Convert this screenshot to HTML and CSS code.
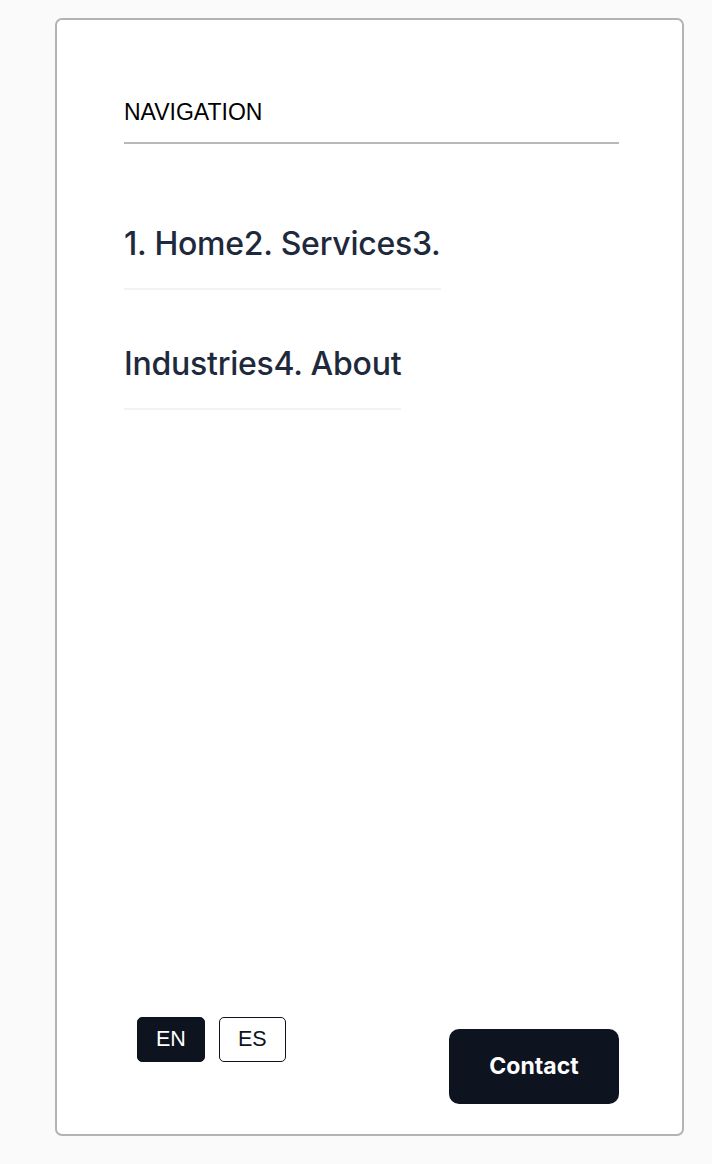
FILE: index.html
```html
<!DOCTYPE html>
<html lang="en">
<head>
<meta charset="utf-8">
<title>Navigation</title>
<link rel="stylesheet" href="styles.css">
</head>
<body>
<aside class="panel">
  <header class="panel-head">NAVIGATION</header>
  <nav class="menu">
    <ol class="menu-list"><li class="menu-item"><a href="#" class="menu-link">1. Home</a></li><li class="menu-item"><a href="#" class="menu-link">2. Services</a></li><li class="menu-item"><a href="#" class="menu-link">3. Industries</a></li><li class="menu-item"><a href="#" class="menu-link">4. About</a></li></ol>
  </nav>
  <footer class="panel-foot">
    <div class="lang">
      <button class="lang-btn is-active" type="button">EN</button>
      <button class="lang-btn" type="button">ES</button>
    </div>
    <a href="#" class="contact">Contact</a>
  </footer>
</aside>
</body>
</html>
```

FILE: styles.css
```css
html, body {
  margin: 0;
  padding: 0;
  background: #fafafa;
}

.panel {
  box-sizing: border-box;
  margin: 18px 0 0 55px;
  width: 629px;
  height: 1118px;
  background: #ffffff;
  border: 2px solid #b3b3b3;
  border-radius: 7px;
  padding: 79px 63px 30px 67px;
  display: flex;
  flex-direction: column;
}

.panel-head {
  font-family: "Liberation Sans", Arial, sans-serif;
  font-size: 23px;
  line-height: 26px;
  color: #000;
  padding-bottom: 17px;
  border-bottom: 2px solid #b8b8b8;
}

.menu {
  margin-top: 40px;
}

.menu-list {
  list-style: none;
  margin: 0;
  padding: 0;
  font-family: Inter, "Noto Sans", sans-serif;
  font-size: 32px;
  font-weight: 500;
  letter-spacing: -0.25px;
  line-height: 120px;
  color: #1e293b;
}

.menu-item {
  display: inline;
}

.menu-link {
  color: inherit;
  text-decoration: none;
  padding-bottom: 25px;
  border-bottom: 2px solid #f1f3f7;
}

.panel-foot {
  margin-top: auto;
  display: flex;
  justify-content: space-between;
  align-items: flex-end;
}

.lang {
  display: flex;
  gap: 14px;
  margin: 0 0 42px 13px;
}

.lang-btn {
  font-family: "Liberation Sans", Arial, sans-serif;
  font-size: 21.5px;
  line-height: 23px;
  padding: 10px 18px;
  border: 1.5px solid #0e1320;
  border-radius: 5px;
  background: #fff;
  color: #0e1320;
  margin: 0;
}

.lang-btn.is-active {
  background: #0e1320;
  color: #fff;
}

.contact {
  font-family: Inter, "Noto Sans", sans-serif;
  font-size: 23px;
  font-weight: 700;
  line-height: 27px;
  color: #fff;
  text-decoration: none;
  background: #0e1320;
  border-radius: 10px;
  width: 170px;
  height: 75px;
  box-sizing: border-box;
  display: flex;
  align-items: center;
  justify-content: center;
}
```
